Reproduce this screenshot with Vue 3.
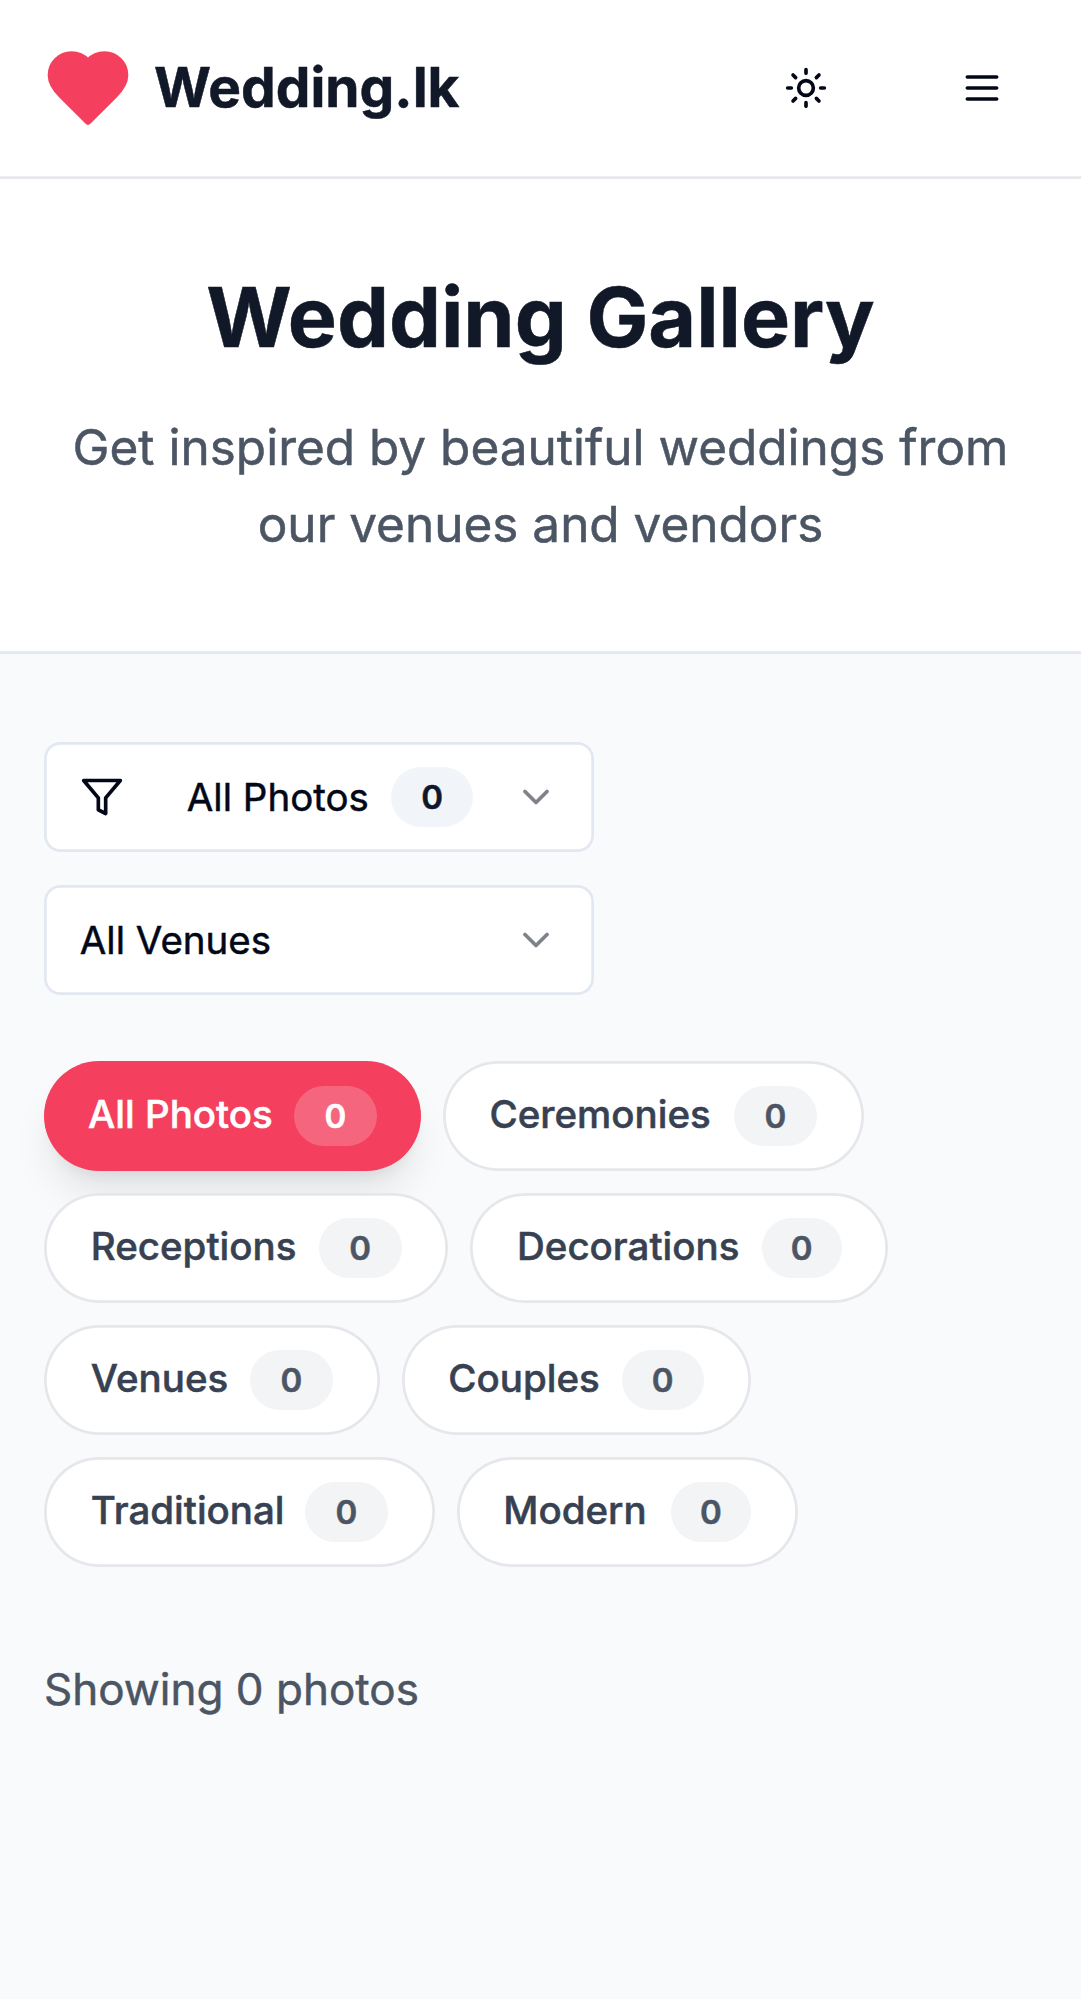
<script setup>
const UNIT = 2.75

// Sizes are in layout units: pill width, badge offset from the pill's left edge, badge width
const categories = [
  { name: 'All Photos', count: 0, width: 137, offset: 91, badge: 30, active: true },
  { name: 'Ceremonies', count: 0, width: 153, offset: 106, badge: 30 },
  { name: 'Receptions', count: 0, width: 147, offset: 100, badge: 30 },
  { name: 'Decorations', count: 0, width: 152, offset: 106, badge: 29 },
  { name: 'Venues', count: 0, width: 122, offset: 75, badge: 30 },
  { name: 'Couples', count: 0, width: 127, offset: 80, badge: 30 },
  { name: 'Traditional', count: 0, width: 142, offset: 95, badge: 30 },
  { name: 'Modern', count: 0, width: 124, offset: 78, badge: 29 },
]

const px = (n) => `${n * UNIT}px`
</script>

<template>
  <div class="page">
    <header class="topbar">
      <a class="brand">
        <svg class="heart" viewBox="0 0 24 24">
          <path d="M19 14c1.49-1.46 3-3.21 3-5.5A5.5 5.5 0 0 0 16.5 3c-1.76 0-3 .5-4.5 2-1.5-1.5-2.74-2-4.5-2A5.5 5.5 0 0 0 2 8.5c0 2.3 1.5 4.05 3 5.5l7 7Z" />
        </svg>
        <span class="brand-name">Wedding.lk</span>
      </a>
      <div class="actions">
        <button class="icon-btn" aria-label="Toggle theme">
          <svg class="icon" viewBox="0 0 24 24">
            <circle cx="12" cy="12" r="4" />
            <path d="M12 2v2M12 20v2M4.93 4.93l1.41 1.41M17.66 17.66l1.41 1.41M2 12h2M20 12h2M6.34 17.66l-1.41 1.41M19.07 4.93l-1.41 1.41" />
          </svg>
        </button>
        <button class="icon-btn" aria-label="Menu">
          <svg class="icon" viewBox="0 0 24 24"><path d="M4 12h16M4 6h16M4 18h16" /></svg>
        </button>
      </div>
    </header>

    <section class="hero">
      <h1>Wedding Gallery</h1>
      <p>Get inspired by beautiful weddings from our venues and vendors</p>
    </section>

    <main class="content">
      <div class="filters">
        <button class="select">
          <svg class="icon funnel" viewBox="0 0 24 24"><path d="M22 3H2l8 9.46V19l4 2v-8.54L22 3z" /></svg>
          <span class="select-value">All Photos<span class="badge">0</span></span>
          <svg class="icon chevron" viewBox="0 0 24 24"><path d="m6 9 6 6 6-6" /></svg>
        </button>
        <button class="select">
          <span class="select-value">All Venues</span>
          <svg class="icon chevron" viewBox="0 0 24 24"><path d="m6 9 6 6 6-6" /></svg>
        </button>
      </div>

      <div class="pills">
        <button
          v-for="c in categories"
          :key="c.name"
          class="pill"
          :class="{ active: c.active }"
          :style="{ width: px(c.width) }"
        >
          <span class="label" :style="{ width: px(c.offset) }">{{ c.name }}</span>
          <span class="badge" :style="{ width: px(c.badge) }">{{ c.count }}</span>
        </button>
      </div>

      <p class="summary">Showing 0 photos</p>
    </main>
  </div>
</template>

<style>
body {
  margin: 0;
  background: #f9fafc;
}
</style>

<style scoped>
.page {
  min-height: 1999px;
  background: #f9fafc;
  font-family: Inter, "Liberation Sans", sans-serif;
  color: #020817;
  -webkit-text-stroke: 0.5px currentColor;
}
.page *,
.page {
  box-sizing: border-box;
}
button {
  font: inherit;
  color: inherit;
  border: 0;
  margin: 0;
  padding: 0;
  background: none;
}
h1,
p {
  margin: 0;
}
.topbar {
  height: 178.75px;
  padding: 0 44px 2.75px;
  display: flex;
  align-items: center;
  justify-content: space-between;
  background: #fff;
  box-shadow: inset 0 -2.75px #e5e7eb;
}
.brand {
  display: flex;
  align-items: center;
  gap: 22px;
}
.heart {
  display: block;
  width: 88px;
  height: 88px;
  fill: #f43f5e;
  stroke: #f43f5e;
  stroke-width: 2;
  stroke-linecap: round;
  stroke-linejoin: round;
}
.brand-name {
  font-size: 55px;
  line-height: 77px;
  padding-bottom: 2px;
  font-weight: 700;
  color: #111827;
}
.actions {
  display: flex;
  gap: 66px;
}
.icon-btn {
  width: 110px;
  height: 99px;
  display: flex;
  align-items: center;
  justify-content: center;
}
.icon {
  display: block;
  flex: none;
  width: 44px;
  height: 44px;
  fill: none;
  stroke: currentColor;
  stroke-width: 2;
  stroke-linecap: round;
  stroke-linejoin: round;
}
.hero {
  padding: 89px 44px 91.5px;
  text-align: center;
  background: #fff;
  box-shadow: inset 0 -2.75px #e2e8f0;
}
.hero h1 {
  font-size: 82.5px;
  line-height: 99px;
  font-weight: 700;
  color: #111827;
  margin-bottom: 42px;
}
.hero p {
  font-size: 49.5px;
  line-height: 77px;
  color: #4b5563;
}
.content {
  padding: 88px 44px;
}
.filters {
  display: flex;
  flex-direction: column;
  gap: 33px;
  margin-bottom: 66px;
}
.select {
  width: 550px;
  height: 110px;
  padding: 0 35.75px;
  display: flex;
  align-items: center;
  justify-content: space-between;
  border-radius: 16.5px;
  background: #fff;
  box-shadow: inset 0 0 0 2.75px #e2e8f0;
  font-size: 38.5px;
  line-height: 55px;
}
.funnel {
  margin-right: 22px;
}
.chevron {
  opacity: 0.5;
}
.select-value {
  display: flex;
  align-items: center;
}
.badge {
  margin-left: 22px;
  height: 60px;
  padding: 5.5px 30.25px;
  border-radius: 999px;
  font-size: 33px;
  line-height: 49px;
  font-weight: 600;
  background: #f1f5f9;
  color: #0f172a;
}
.pills {
  display: flex;
  flex-wrap: wrap;
  gap: 22px;
  margin-bottom: 88.75px;
}
.pill {
  height: 110px;
  padding-top: 25px;
  display: flex;
  align-items: baseline;
  border-radius: 999px;
  background: #fff;
  box-shadow: inset 0 0 0 2.75px #e5e7eb;
  font-size: 38.5px;
  line-height: 55px;
  font-weight: 500;
  color: #374151;
}
.label {
  flex: none;
  padding-left: 46.75px;
  text-align: left;
  white-space: nowrap;
}
.pill .badge {
  flex: none;
  margin-left: 0;
  padding-left: 0;
  padding-right: 0;
  text-align: center;
  background: #f3f4f6;
  color: #4b5563;
}
.pill.active {
  background: #f43f5e;
  color: #fff;
  box-shadow: 0 27.5px 41.25px -8.25px rgba(0, 0, 0, 0.1), 0 11px 16.5px -11px rgba(0, 0, 0, 0.1);
}
.pill.active .label {
  padding-left: 44px;
}
.pill.active .badge {
  background: rgba(255, 255, 255, 0.2);
  color: #fff;
}
.summary {
  font-size: 44px;
  line-height: 66px;
  color: #4b5563;
}
</style>
